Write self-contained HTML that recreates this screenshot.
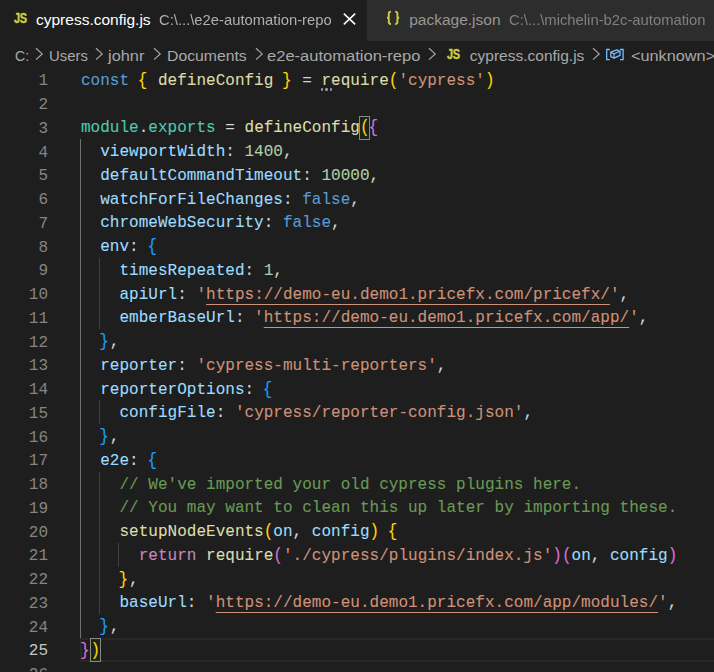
<!DOCTYPE html>
<html><head><meta charset="utf-8"><style>
*{margin:0;padding:0;box-sizing:border-box}
html,body{width:714px;height:672px;overflow:hidden;background:#1e1e1e}
body{position:relative;font-family:"Liberation Sans",sans-serif}
.abs{position:absolute}
.tab{position:absolute;top:0;height:41px}
.t1{left:0;width:367px;background:#1e1e1e}
.t2{left:367px;width:347px;background:#2d2d2d}
.lbl{position:absolute;white-space:pre;font-size:15.5px;line-height:20px}
.bc{position:absolute;white-space:pre;font-size:15.5px;line-height:20px;color:#a9a9a9}
.ln{position:absolute;left:0;width:48px;text-align:right;font-family:"Liberation Mono",monospace;font-size:17.0px;color:#858585;white-space:pre}
.code{position:absolute;left:80.5px;font-family:"Liberation Mono",monospace;font-size:17.0px;white-space:pre;color:#d4d4d4;-webkit-text-stroke:0.1px currentColor;transform-origin:0 0;transform:scaleX(0.94270)}
.lnw{transform-origin:100% 0;transform:scaleX(0.94270)}
.guide{position:absolute;width:1px;background:#404040}
.guide.act{background:#707070}
.bm{position:absolute;border:1px solid #888888;background:rgba(0,100,0,.1)}
.br{display:inline-block;transform:translateX(-1px) scaleY(1.08)}
.pr{display:inline-block;transform:scaleY(1.1)}
.u{text-decoration:underline;text-underline-offset:5px;text-decoration-thickness:1px}
.d{color:#d4d4d4}
.kw{color:#569cd6}
.fn{color:#dcdcaa}
.str{color:#ce9178}
.num{color:#b5cea8}
.prop{color:#9cdcfe}
.cls{color:#4ec9b0}
.cmt{color:#6a9955}
.ctl{color:#c586c0}
.b1{color:#ffd700}
.b2{color:#da70d6}
.b3{color:#179fff}
</style></head><body>
<div class="tab t1"></div><div class="tab t2"></div>
<div class="abs" style="left:13.6px;top:10.5px;font-weight:bold;font-size:14px;color:#cbcb41;line-height:14px;transform-origin:0 0;transform:scaleX(0.78);letter-spacing:-0.3px;-webkit-text-stroke:0.5px #cbcb41">JS</div>
<div class="lbl" style="left:36px;top:9.7px;color:#ffffff">cypress.config.js</div>
<div class="lbl" style="left:158.8px;top:9.8px;font-size:14.8px;color:#b0b0b0;will-change:transform">C:\...\e2e-automation-repo</div>
<svg class="abs" style="left:343px;top:13px" width="13" height="12" viewBox="0 0 13 12"><path d="M0.8 0.6L12.2 11.4M12.2 0.6L0.8 11.4" stroke="#ffffff" stroke-width="1.5"/></svg>
<svg class="abs" style="left:384px;top:9px" width="18" height="18" viewBox="0 0 18 18"><path d="M7 2.6C5.4 2.6 4.8 3.2 4.8 4.6V7.5C4.8 8.3 4.3 8.8 3 8.8C4.3 8.8 4.8 9.3 4.8 10.1V13C4.8 14.4 5.4 15 7 15M11.2 2.6C12.8 2.6 13.4 3.2 13.4 4.6V7.5C13.4 8.3 13.9 8.8 15.2 8.8C13.9 8.8 13.4 9.3 13.4 10.1V13C13.4 14.4 12.8 15 11.2 15" fill="none" stroke="#cbcb41" stroke-width="1.9"/></svg>
<div class="lbl" style="left:409.2px;top:9.7px;color:#969696">package.json</div>
<div class="lbl" style="left:508.5px;top:9.8px;font-size:14.8px;color:#808080;will-change:transform">C:\...\michelin-b2c-automation</div>
<div class="bc" style="left:15.0px;top:45.9px;transform-origin:0 0;transform:scaleX(0.910)">C:</div>
<div class="bc" style="left:48.6px;top:45.9px;transform-origin:0 0;transform:scaleX(0.960)">Users</div>
<div class="bc" style="left:107.8px;top:45.9px;transform-origin:0 0;transform:scaleX(1.054)">johnr</div>
<div class="bc" style="left:166.7px;top:45.9px;transform-origin:0 0;transform:scaleX(1.017)">Documents</div>
<div class="bc" style="left:267.3px;top:45.9px;transform-origin:0 0;transform:scaleX(1.066)">e2e-automation-repo</div>
<div class="bc" style="left:469.8px;top:45.9px;transform-origin:0 0;transform:scaleX(1.000)">cypress.config.js</div>
<div class="bc" style="left:631.0px;top:45.9px;transform-origin:0 0;transform:scaleX(1.050)">&lt;unknown&gt;</div>
<svg class="abs" style="left:34.6px;top:47px" width="9" height="14" viewBox="0 0 9 14"><path d="M1 1.2L7.2 6.9L1 12.6" fill="none" stroke="#a9a9a9" stroke-width="1.2"/></svg>
<svg class="abs" style="left:94.5px;top:47px" width="9" height="14" viewBox="0 0 9 14"><path d="M1 1.2L7.2 6.9L1 12.6" fill="none" stroke="#a9a9a9" stroke-width="1.2"/></svg>
<svg class="abs" style="left:152.5px;top:47px" width="9" height="14" viewBox="0 0 9 14"><path d="M1 1.2L7.2 6.9L1 12.6" fill="none" stroke="#a9a9a9" stroke-width="1.2"/></svg>
<svg class="abs" style="left:255.0px;top:47px" width="9" height="14" viewBox="0 0 9 14"><path d="M1 1.2L7.2 6.9L1 12.6" fill="none" stroke="#a9a9a9" stroke-width="1.2"/></svg>
<svg class="abs" style="left:428.1px;top:47px" width="9" height="14" viewBox="0 0 9 14"><path d="M1 1.2L7.2 6.9L1 12.6" fill="none" stroke="#a9a9a9" stroke-width="1.2"/></svg>
<svg class="abs" style="left:591.5px;top:47px" width="9" height="14" viewBox="0 0 9 14"><path d="M1 1.2L7.2 6.9L1 12.6" fill="none" stroke="#a9a9a9" stroke-width="1.2"/></svg>
<div class="abs" style="left:446.8px;top:46.6px;font-weight:bold;font-size:14px;color:#cbcb41;line-height:14px;transform-origin:0 0;transform:scaleX(0.78);letter-spacing:-0.3px;-webkit-text-stroke:0.5px #cbcb41">JS</div>
<svg class="abs" style="left:604px;top:47px" width="22" height="15" viewBox="0 0 22 15"><path d="M5.8 2.5H2.7V12.6H5.8M16 2.5H19.1V12.6H16" fill="none" stroke="#75beff" stroke-width="1.3"/><path d="M6.8 5.2L12.8 2.8L16 4.3V8.3L10 11.2L6.8 9.6Z" fill="none" stroke="#75beff" stroke-width="1.3" stroke-linejoin="round"/><path d="M6.8 5.2L10 6.8L16 4.3M10 6.8V11.2" fill="none" stroke="#75beff" stroke-width="1.2"/></svg>
<div class="abs" style="left:80px;top:637.75px;width:700px;height:24.00px;border:2px solid #282828"></div>
<div class="guide act" style="left:80.00px;top:139.00px;height:498.75px"></div>
<div class="guide" style="left:99.00px;top:257.75px;height:71.25px"></div>
<div class="guide" style="left:99.00px;top:400.25px;height:23.75px"></div>
<div class="guide" style="left:99.00px;top:471.50px;height:142.50px"></div>
<div class="guide" style="left:118.00px;top:542.75px;height:23.75px"></div>
<div class="bm" style="left:358.99px;top:115.55px;width:11.02px;height:24.15px"></div>
<div class="bm" style="left:89.72px;top:638.05px;width:11.02px;height:24.15px"></div>
<div class="ln lnw" style="top:69.25px;line-height:23.75px;color:#858585">1</div>
<div class="code" style="top:68.75px;line-height:23.75px"><span class="kw">const</span><span class="d"> </span><span class="b1 br">{</span><span class="d"> </span><span class="fn">defineConfig</span><span class="d"> </span><span class="b1 br">}</span><span class="d"> = </span><span class="fn">require</span><span class="b1 pr">(</span><span class="str">&#x27;cypress&#x27;</span><span class="b1 pr">)</span></div>
<div class="ln lnw" style="top:93.00px;line-height:23.75px;color:#858585">2</div>
<div class="ln lnw" style="top:116.75px;line-height:23.75px;color:#858585">3</div>
<div class="code" style="top:116.25px;line-height:23.75px"><span class="cls">module</span><span class="d">.</span><span class="cls">exports</span><span class="d"> = </span><span class="fn">defineConfig</span><span class="b1 pr">(</span><span class="b2 br">{</span></div>
<div class="ln lnw" style="top:140.50px;line-height:23.75px;color:#858585">4</div>
<div class="code" style="top:140.00px;line-height:23.75px"><span class="d">  </span><span class="prop">viewportWidth</span><span class="d">: </span><span class="num">1400</span><span class="d">,</span></div>
<div class="ln lnw" style="top:164.25px;line-height:23.75px;color:#858585">5</div>
<div class="code" style="top:163.75px;line-height:23.75px"><span class="d">  </span><span class="prop">defaultCommandTimeout</span><span class="d">: </span><span class="num">10000</span><span class="d">,</span></div>
<div class="ln lnw" style="top:188.00px;line-height:23.75px;color:#858585">6</div>
<div class="code" style="top:187.50px;line-height:23.75px"><span class="d">  </span><span class="prop">watchForFileChanges</span><span class="d">: </span><span class="kw">false</span><span class="d">,</span></div>
<div class="ln lnw" style="top:211.75px;line-height:23.75px;color:#858585">7</div>
<div class="code" style="top:211.25px;line-height:23.75px"><span class="d">  </span><span class="prop">chromeWebSecurity</span><span class="d">: </span><span class="kw">false</span><span class="d">,</span></div>
<div class="ln lnw" style="top:235.50px;line-height:23.75px;color:#858585">8</div>
<div class="code" style="top:235.00px;line-height:23.75px"><span class="d">  </span><span class="prop">env</span><span class="d">: </span><span class="b3 br">{</span></div>
<div class="ln lnw" style="top:259.25px;line-height:23.75px;color:#858585">9</div>
<div class="code" style="top:258.75px;line-height:23.75px"><span class="d">    </span><span class="prop">timesRepeated</span><span class="d">: </span><span class="num">1</span><span class="d">,</span></div>
<div class="ln lnw" style="top:283.00px;line-height:23.75px;color:#858585">10</div>
<div class="code" style="top:282.50px;line-height:23.75px"><span class="d">    </span><span class="prop">apiUrl</span><span class="d">: </span><span class="str">&#x27;</span><span class="str u">https://demo-eu.demo1.pricefx.com/pricefx/</span><span class="str">&#x27;</span><span class="d">,</span></div>
<div class="ln lnw" style="top:306.75px;line-height:23.75px;color:#858585">11</div>
<div class="code" style="top:306.25px;line-height:23.75px"><span class="d">    </span><span class="prop">emberBaseUrl</span><span class="d">: </span><span class="str">&#x27;</span><span class="str u">https://demo-eu.demo1.pricefx.com/app/</span><span class="str">&#x27;</span><span class="d">,</span></div>
<div class="ln lnw" style="top:330.50px;line-height:23.75px;color:#858585">12</div>
<div class="code" style="top:330.00px;line-height:23.75px"><span class="d">  </span><span class="b3 br">}</span><span class="d">,</span></div>
<div class="ln lnw" style="top:354.25px;line-height:23.75px;color:#858585">13</div>
<div class="code" style="top:353.75px;line-height:23.75px"><span class="d">  </span><span class="prop">reporter</span><span class="d">: </span><span class="str">&#x27;cypress-multi-reporters&#x27;</span><span class="d">,</span></div>
<div class="ln lnw" style="top:378.00px;line-height:23.75px;color:#858585">14</div>
<div class="code" style="top:377.50px;line-height:23.75px"><span class="d">  </span><span class="prop">reporterOptions</span><span class="d">: </span><span class="b3 br">{</span></div>
<div class="ln lnw" style="top:401.75px;line-height:23.75px;color:#858585">15</div>
<div class="code" style="top:401.25px;line-height:23.75px"><span class="d">    </span><span class="prop">configFile</span><span class="d">: </span><span class="str">&#x27;cypress/reporter-config.json&#x27;</span><span class="d">,</span></div>
<div class="ln lnw" style="top:425.50px;line-height:23.75px;color:#858585">16</div>
<div class="code" style="top:425.00px;line-height:23.75px"><span class="d">  </span><span class="b3 br">}</span><span class="d">,</span></div>
<div class="ln lnw" style="top:449.25px;line-height:23.75px;color:#858585">17</div>
<div class="code" style="top:448.75px;line-height:23.75px"><span class="d">  </span><span class="prop">e2e</span><span class="d">: </span><span class="b3 br">{</span></div>
<div class="ln lnw" style="top:473.00px;line-height:23.75px;color:#858585">18</div>
<div class="code" style="top:472.50px;line-height:23.75px"><span class="d">    </span><span class="cmt">// We&#x27;ve imported your old cypress plugins here.</span></div>
<div class="ln lnw" style="top:496.75px;line-height:23.75px;color:#858585">19</div>
<div class="code" style="top:496.25px;line-height:23.75px"><span class="d">    </span><span class="cmt">// You may want to clean this up later by importing these.</span></div>
<div class="ln lnw" style="top:520.50px;line-height:23.75px;color:#858585">20</div>
<div class="code" style="top:520.00px;line-height:23.75px"><span class="d">    </span><span class="fn">setupNodeEvents</span><span class="b1 pr">(</span><span class="prop">on</span><span class="d">, </span><span class="prop">config</span><span class="b1 pr">)</span><span class="d"> </span><span class="b1 br">{</span></div>
<div class="ln lnw" style="top:544.25px;line-height:23.75px;color:#858585">21</div>
<div class="code" style="top:543.75px;line-height:23.75px"><span class="d">      </span><span class="ctl">return</span><span class="d"> </span><span class="fn">require</span><span class="b2 pr">(</span><span class="str">&#x27;./cypress/plugins/index.js&#x27;</span><span class="b2 pr">)</span><span class="b2 pr">(</span><span class="prop">on</span><span class="d">, </span><span class="prop">config</span><span class="b2 pr">)</span></div>
<div class="ln lnw" style="top:568.00px;line-height:23.75px;color:#858585">22</div>
<div class="code" style="top:567.50px;line-height:23.75px"><span class="d">    </span><span class="b1 br">}</span><span class="d">,</span></div>
<div class="ln lnw" style="top:591.75px;line-height:23.75px;color:#858585">23</div>
<div class="code" style="top:591.25px;line-height:23.75px"><span class="d">    </span><span class="prop">baseUrl</span><span class="d">: </span><span class="str">&#x27;</span><span class="str u">https://demo-eu.demo1.pricefx.com/app/modules/</span><span class="str">&#x27;</span><span class="d">,</span></div>
<div class="ln lnw" style="top:615.50px;line-height:23.75px;color:#858585">24</div>
<div class="code" style="top:615.00px;line-height:23.75px"><span class="d">  </span><span class="b3 br">}</span><span class="d">,</span></div>
<div class="ln lnw" style="top:639.25px;line-height:23.75px;color:#c6c6c6">25</div>
<div class="code" style="top:638.75px;line-height:23.75px"><span class="b2 br">}</span><span class="b1 pr">)</span></div>
<div class="ln lnw" style="top:663.00px;line-height:23.75px;color:#858585">26</div>
<div class="abs" style="left:320.7px;top:88.2px;width:2.4px;height:2.4px;border-radius:1.2px;background:#9a9a9a"></div>
<div class="abs" style="left:325.2px;top:88.2px;width:2.4px;height:2.4px;border-radius:1.2px;background:#9a9a9a"></div>
<div class="abs" style="left:329.8px;top:88.2px;width:2.4px;height:2.4px;border-radius:1.2px;background:#9a9a9a"></div>
</body></html>
